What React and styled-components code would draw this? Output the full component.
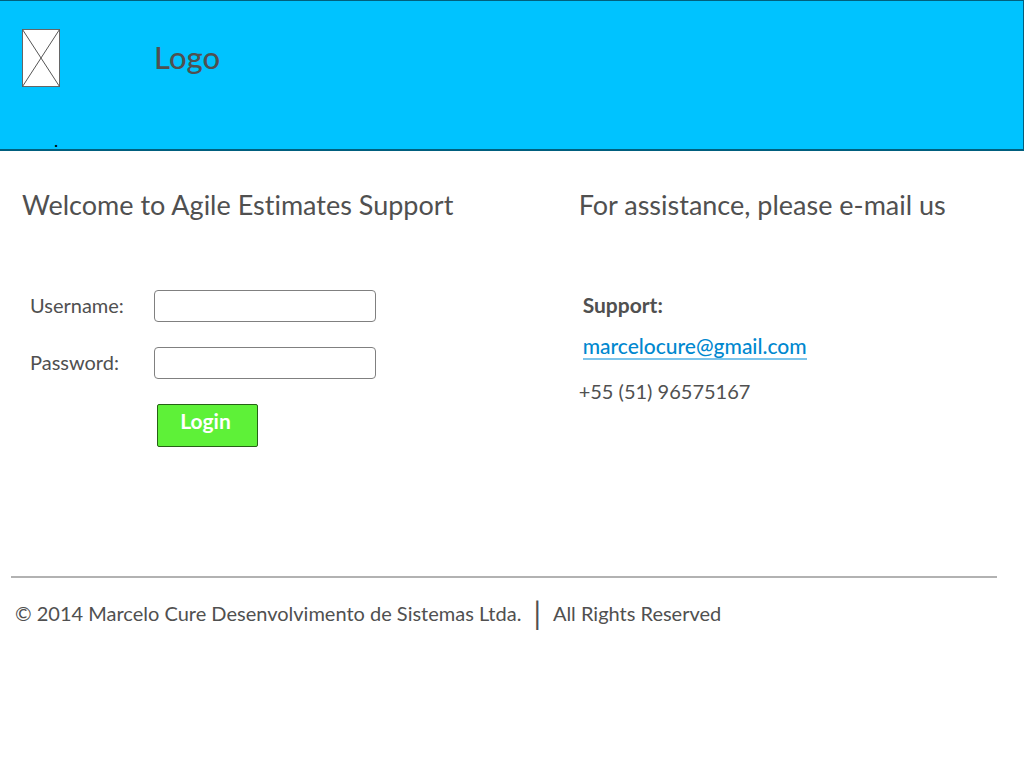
import React from "react";
import styled, { createGlobalStyle } from "styled-components";

const GlobalStyle = createGlobalStyle`
  *, *::before, *::after { box-sizing: border-box; }
  body {
    margin: 0;
    background: #fff;
    color: #505050;
    font-family: Lato, "Open Sans", sans-serif;
    font-variant-ligatures: none;
  }
`;

const Header = styled.header`
  min-height: 151px;
  padding: 28px 22px 0;
  background: #00c3ff;
  border: solid #005f7e;
  border-width: 1px 1px 2px 0;
`;

const Brand = styled.div`
  display: flex;
  align-items: center;
  gap: 94px;
`;

const Placeholder = styled.svg`
  display: block;
  width: 38px;
  height: 58px;
`;

const LogoText = styled.span`
  font-size: 31px;
  line-height: 36px;
  padding-bottom: 2px;
  font-weight: 500;
`;

const Dot = styled.div`
  margin-top: 44px;
  padding-left: 32px;
  color: #000;
  font-size: 18px;
  line-height: 18px;
`;

const Columns = styled.main`
  display: grid;
  grid-template-columns: 5fr 4fr;
  padding: 36px 0 0 22px;
`;

const Title = styled.h1`
  margin: 0 0 67px;
  font-size: 27px;
  line-height: 36px;
  font-weight: 400;
  white-space: nowrap;
`;

const Form = styled.form`
  display: grid;
  grid-template-columns: 124px 222px;
  row-gap: 25px;
  padding-left: 8px;
`;

const Label = styled.label`
  font-size: 20px;
  line-height: 30px;
`;

const Field = styled.input`
  width: 100%;
  height: 32px;
  padding: 0 8px;
  border: 1px solid #808080;
  border-radius: 4px;
  background: #fff;
  color: inherit;
  font: inherit;
`;

const LoginButton = styled.button`
  grid-column: 2;
  justify-self: start;
  width: 101px;
  height: 43px;
  margin-left: 3px;
  padding: 0 4px 10px 0;
  border: 1px solid #266116;
  border-radius: 2px;
  background: #5ef138;
  color: #fff;
  font: inherit;
  font-size: 21px;
  font-weight: 700;
`;

const Contact = styled.address`
  display: flex;
  flex-direction: column;
  align-items: flex-start;
  font-style: normal;
  font-size: 20px;
  line-height: 30px;
`;

const ContactName = styled.strong`
  padding-left: 4px;
  font-size: 21px;
`;

const MailLink = styled.a`
  margin: 14px 0 16px 4px;
  border-bottom: 2px solid #7cc4ea;
  color: #0088cf;
  font-size: 21px;
  line-height: 24px;
  font-weight: 500;
  text-decoration: none;
`;

const Phone = styled.span`
  font-size: 20px;
`;

const Footer = styled.footer`
  display: flex;
  align-items: center;
  gap: 12px;
  margin: 129px 27px 0 11px;
  padding: 17px 4px;
  border-top: 2px solid #b2b2b2;
  font-size: 20px;
  line-height: 36px;
`;

const Divider = styled.span`
  font-size: 30px;
`;

function FormRow({ id, label, type }) {
  return (
    <>
      <Label htmlFor={id}>{label}</Label>
      <Field id={id} name={id} type={type} />
    </>
  );
}

export default function App() {
  return (
    <>
      <GlobalStyle />
      <Header>
        <Brand>
          <Placeholder viewBox="0 0 38 58" aria-hidden="true">
            <rect x="0.5" y="0.5" width="37" height="57" fill="#fff" stroke="#666" />
            <path d="M0.5 0.5L37.5 57.5M37.5 0.5L0.5 57.5" stroke="#555" fill="none" />
          </Placeholder>
          <LogoText>Logo</LogoText>
        </Brand>
        <Dot>.</Dot>
      </Header>
      <Columns>
        <section>
          <Title>Welcome to Agile Estimates Support</Title>
          <Form>
            <FormRow id="username" label="Username:" type="text" />
            <FormRow id="password" label="Password:" type="password" />
            <LoginButton type="button">Login</LoginButton>
          </Form>
        </section>
        <section>
          <Title as="h2">For assistance, please e-mail us</Title>
          <Contact>
            <ContactName>Support:</ContactName>
            <MailLink href="mailto:marcelocure@gmail.com">marcelocure@gmail.com</MailLink>
            <Phone>+55 (51) 96575167</Phone>
          </Contact>
        </section>
      </Columns>
      <Footer>
        <span>© 2014 Marcelo Cure Desenvolvimento de Sistemas Ltda.</span>
        <Divider>|</Divider>
        <span>All Rights Reserved</span>
      </Footer>
    </>
  );
}
